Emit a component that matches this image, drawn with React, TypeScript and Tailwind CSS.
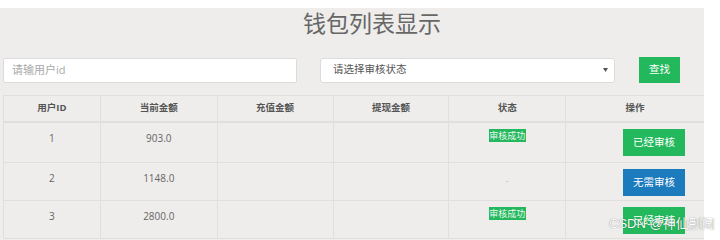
import React from 'react'

type Row = {
  id: number
  balance: string
  approved: boolean
}

const rows: Row[] = [
  { id: 1, balance: '903.0', approved: true },
  { id: 2, balance: '1148.0', approved: false },
  { id: 3, balance: '2800.0', approved: true },
]

const cols = ['w-[97px]', 'w-[117px]', 'w-[116px]', 'w-[116px]', 'w-[117px]', 'w-[138px]']
const heads = ['用户ID', '当前金额', '充值金额', '提现金额', '状态', '操作']
const rowHeights = ['h-[40px]', 'h-[38px]', 'h-[38px]']

const StatusBadge = () => (
  <span className="inline-flex h-[13px] w-[37px] items-center justify-center overflow-hidden bg-[#23b85c] text-[9px] leading-none text-[#e9f7ee]">
    <span className="whitespace-nowrap">审核成功</span>
  </span>
)

const App = () => {
  return (
    <div className="relative h-[240px] w-[720px] overflow-hidden bg-white font-['Open_Sans','Noto_Sans_CJK_SC',sans-serif]">
      <div className="mt-2 h-[232px] w-[704px] bg-[#eeedeb]">
        <h1 className="pl-[303px] text-[23px] leading-[30px] font-normal text-[#676767]">钱包列表显示</h1>

        <div className="mt-[19px] flex items-center pl-[3px]">
          <div className="flex h-[25px] w-[294px] items-center rounded-[2px] border border-[#dcdcdc] bg-white px-[8px] text-[11px] text-[#a9a9a9]">
            请输用户id
          </div>
          <div className="ml-[23px] flex h-[25px] w-[295px] items-center justify-between rounded-[3px] border border-[#dcdcdc] bg-white pl-[12px] pr-[5px] text-[10.5px] text-[#555]">
            <span>请选择审核状态</span>
            {/* small caret like a native select */}
            <svg width="5" height="4" viewBox="0 0 5 4" className="mr-[1px]">
              <path d="M0 0h5L2.5 4z" fill="#555" />
            </svg>
          </div>
          <button className="ml-[24px] flex h-[26px] w-[41px] items-center justify-center bg-[#23b85c] text-[10.5px] text-white">
            查找
          </button>
        </div>

        <div className="ml-[3px] mt-[12px] w-[701px] border-l border-t border-[#e0dfdd] text-[#666]">
          <div className="flex h-[27px] border-b-2 border-[#e0dfdd]">
            {heads.map((h, i) => (
              <div
                key={h}
                className={`${cols[i]} flex items-center justify-center border-r border-[#e0dfdd] text-[9.5px] font-bold text-[#555] last:border-r-0`}
              >
                {h}
              </div>
            ))}
          </div>
          {rows.map((r, ri) => (
            <div key={r.id} className={`${rowHeights[ri]} flex border-b border-[#e0dfdd] text-[10px]`}>
              <div className={`${cols[0]} border-r border-[#e0dfdd] pt-[8px] text-center`}>{r.id}</div>
              <div className={`${cols[1]} border-r border-[#e0dfdd] pt-[8px] text-center`}>{r.balance}</div>
              <div className={`${cols[2]} border-r border-[#e0dfdd]`} />
              <div className={`${cols[3]} border-r border-[#e0dfdd]`} />
              <div className={`${cols[4]} flex justify-center border-r border-[#e0dfdd] pt-[6px]`}>
                {r.approved ? <StatusBadge /> : <span className="pt-[5px] text-[9px] text-[#bbb]">-</span>}
              </div>
              <div className={`${cols[5]} flex justify-end pr-[19px] pt-[6px]`}>
                <button
                  className={`flex h-[27px] w-[62px] items-center justify-center text-[10.5px] text-white ${r.approved ? 'bg-[#23b85c]' : 'bg-[#1b7bbd]'}`}
                >
                  {r.approved ? '已经审核' : '无需审核'}
                </button>
              </div>
            </div>
          ))}
        </div>
      </div>

      <span className="absolute left-[609px] top-[216px] text-[13px] leading-[16px] text-white [text-shadow:0_0_1px_rgba(0,0,0,0.6)] font-['Liberation_Sans','Noto_Sans_CJK_SC',sans-serif]">
        CSDN @神仙别闹
      </span>
    </div>
  )
}

export default App
